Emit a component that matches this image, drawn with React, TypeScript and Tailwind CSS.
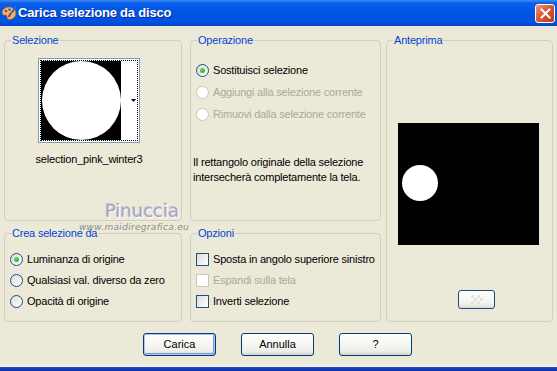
import React from "react";

const font = "font-['Liberation_Sans',Arial,sans-serif]";

const Radio = ({ checked, disabled }: { checked?: boolean; disabled?: boolean }) => (
  <span
    className={
      disabled
        ? "flex h-[13px] w-[13px] shrink-0 items-center justify-center rounded-full border border-[#cac8bb] bg-white"
        : "flex h-[13px] w-[13px] shrink-0 items-center justify-center rounded-full border border-[#1c5180] bg-[linear-gradient(135deg,#dcdcd7,#ffffff)]"
    }
  >
    {checked && <span className="h-[5px] w-[5px] rounded-full bg-[radial-gradient(circle_at_35%_35%,#5fdc5a,#21a121)]" />}
  </span>
);

const Check = ({ disabled }: { disabled?: boolean }) => (
  <span
    className={
      disabled
        ? "h-[13px] w-[13px] shrink-0 border border-[#cac8bb] bg-white"
        : "h-[13px] w-[13px] shrink-0 border border-[#1c5180] bg-[linear-gradient(135deg,#dcdcd7,#ffffff)]"
    }
  />
);

const Legend = ({ children }: { children: React.ReactNode }) => (
  <legend className="ml-[6px] px-[1px] text-[11px] leading-[13px] text-[#0046d5]">{children}</legend>
);

const Group = ({ title, className, children }: { title: string; className: string; children: React.ReactNode }) => (
  <fieldset className={`m-0 min-w-0 rounded-[4px] border border-[#d0d0bf] p-0 ${className}`}>
    <Legend>{title}</Legend>
    {children}
  </fieldset>
);

const XpButton = ({ label, primary }: { label: string; primary?: boolean }) => (
  <button
    className={
      primary
        ? "flex h-[23px] w-[73px] items-center justify-center rounded-[3px] border border-[#003c74] bg-[linear-gradient(#ffffff,#f0f0ea_80%,#d8d4c6)] text-[11px] text-black shadow-[inset_0_0_0_1px_#a9c4f0,inset_-1px_-1px_0_1px_#7a97e8]"
        : "flex h-[23px] w-[73px] items-center justify-center rounded-[3px] border border-[#003c74] bg-[linear-gradient(#ffffff,#f0f0ea_80%,#d8d4c6)] text-[11px] text-black"
    }
  >
    {label}
  </button>
);

const AppIcon = () => (
  <svg width="16" height="16" viewBox="0 0 16 16">
    <path d="M8 2C4 2 1 4.5 1 7.5c0 2.5 2 3 3.5 2.8 1.3-.2 1.8.6 1.5 1.8-.3 1.4.6 2.4 2.4 2.4C12.2 14.5 15 11.8 15 8.2 15 4.6 12 2 8 2z" fill="#e9b77a" stroke="#8b5a22" strokeWidth="0.8" />
    <circle cx="5" cy="6" r="1.3" fill="#d8261c" />
    <circle cx="8.5" cy="4.6" r="1.2" fill="#2255d6" />
    <circle cx="11.8" cy="6.2" r="1.2" fill="#2f9d2f" />
    <path d="M15 1.5 9 9.5" stroke="#3a5fd0" strokeWidth="1.6" strokeLinecap="round" />
    <path d="M9.2 9.2 8 11.2" stroke="#c0301c" strokeWidth="2" strokeLinecap="round" />
  </svg>
);

export default function App() {
  return (
    <div className={`relative flex h-[371px] w-[557px] flex-col overflow-hidden bg-[#ece9d8] ${font}`}>
      {/* Title bar */}
      <div className="flex h-[26px] shrink-0 items-center bg-[linear-gradient(#3d8cf5,#0a5fea_12%,#0055e5_45%,#0053e0_80%,#0046c9)] pl-[1px] pr-[2px]">
        <AppIcon />
        <span className="ml-[1px] text-[13px] font-bold tracking-[-0.2px] text-white [text-shadow:1px_1px_#0b2a8f]">
          Carica selezione da disco
        </span>
        <span className="ml-auto flex h-[19px] w-[20px] items-center justify-center rounded-[3px] border border-white bg-[linear-gradient(135deg,#f0957a,#d9532f_50%,#c13a1a)]">
          <svg width="11" height="11" viewBox="0 0 11 11">
            <path d="M1.5 1.5l8 8M9.5 1.5l-8 8" stroke="white" strokeWidth="2" strokeLinecap="square" />
          </svg>
        </span>
      </div>

      {/* Body */}
      <div className="flex flex-1 flex-col whitespace-nowrap pl-[4px] pt-[8px] tracking-[-0.2px]">
        <div className="grid grid-cols-[178px_8px_191px_5px_167px] grid-rows-[187px_95px] gap-y-[6px]">
          <Group title="Selezione" className="col-start-1 row-start-1">
            <div className="ml-[24px] mt-[11px] flex w-[120px] flex-col items-center">
              <div className="h-[85px] w-[102px] border border-[#7f9db9] bg-white p-[1px]">
                <div className="flex h-full w-full border border-dotted border-black">
                  <div className="flex h-[79px] w-[80px] items-center justify-center bg-black">
                    <div className="h-[79px] w-[79px] rounded-full bg-white" />
                  </div>
                  <div className="flex flex-1 items-center justify-end pr-[1px]">
                    <svg width="5" height="3" viewBox="0 0 5 3">
                      <path d="M0 0h5L2.5 3z" fill="black" />
                    </svg>
                  </div>
                </div>
              </div>
              <span className="mt-[10px] text-[11px] leading-[13px] text-black">selection_pink_winter3</span>
            </div>
          </Group>

          <Group title="Operazione" className="col-start-3 row-start-1">
            <div className="ml-[5px] mt-[12px] flex flex-col text-[11px]">
              <div className="flex h-[22px] items-center gap-[4px] text-black">
                <Radio checked />
                <span>Sostituisci selezione</span>
              </div>
              <div className="flex h-[22px] items-center gap-[4px] text-[#aca899]">
                <Radio disabled />
                <span>Aggiungi alla selezione corrente</span>
              </div>
              <div className="flex h-[22px] items-center gap-[4px] text-[#aca899]">
                <Radio disabled />
                <span>Rimuovi dalla selezione corrente</span>
              </div>
            </div>
            <p className="ml-[2px] mt-[30px] text-[11px] leading-[15px] text-black">
              Il rettangolo originale della selezione
              <br />
              intersecherà completamente la tela.
            </p>
          </Group>

          <Group title="Anteprima" className="col-start-5 row-span-2 row-start-1">
            <div className="ml-[11px] mt-[76px] h-[122px] w-[141px] bg-black pl-[4px] pt-[42px]">
              <div className="h-[36px] w-[36px] rounded-full bg-white" />
            </div>
            <button className="ml-[71px] mt-[45px] flex h-[19px] w-[37px] items-center justify-center rounded-[3px] border border-[#1c4a80] bg-[linear-gradient(#ffffff,#f4f4f0_70%,#dedbd0)]">
              <svg width="16" height="10" viewBox="0 0 16 10">
                <g fill="#e4e4e4">
                  <rect x="2" y="0" width="3" height="3" />
                  <rect x="8" y="0" width="3" height="3" />
                  <rect x="5" y="3" width="3" height="3" />
                  <rect x="11" y="3" width="3" height="3" />
                  <rect x="2" y="6" width="3" height="3" />
                  <rect x="8" y="6" width="3" height="3" />
                </g>
              </svg>
            </button>
          </Group>

          <Group title="Crea selezione da" className="col-start-1 row-start-2">
            <div className="ml-[5px] mt-[9px] flex flex-col text-[11px] text-black">
              <div className="flex h-[21px] items-center gap-[4px]">
                <Radio checked />
                <span>Luminanza di origine</span>
              </div>
              <div className="flex h-[21px] items-center gap-[4px]">
                <Radio />
                <span>Qualsiasi val. diverso da zero</span>
              </div>
              <div className="flex h-[21px] items-center gap-[4px]">
                <Radio />
                <span>Opacità di origine</span>
              </div>
            </div>
          </Group>

          <Group title="Opzioni" className="col-start-3 row-start-2">
            <div className="ml-[5px] mt-[9px] flex flex-col text-[11px]">
              <div className="flex h-[21px] items-center gap-[4px] text-black">
                <Check />
                <span>Sposta in angolo superiore sinistro</span>
              </div>
              <div className="flex h-[21px] items-center gap-[4px] text-[#aca899]">
                <Check disabled />
                <span>Espandi sulla tela</span>
              </div>
              <div className="flex h-[21px] items-center gap-[4px] text-black">
                <Check />
                <span>Inverti selezione</span>
              </div>
            </div>
          </Group>
        </div>

        {/* Buttons */}
        <div className="ml-[139px] mt-[11px] flex gap-[25px] tracking-normal">
          <XpButton label="Carica" primary />
          <XpButton label="Annulla" />
          <XpButton label="?" />
        </div>
      </div>

      {/* Bottom frame */}
      <div className="h-[2px] shrink-0 bg-[#f4f2e8]" />
      <div className="h-[4px] shrink-0 bg-[linear-gradient(#1c4bd0,#0a2fa8)]" />

      {/* Watermark */}
      <div className="pointer-events-none absolute left-[74px] top-[199px] flex w-[115px] flex-col items-end">
        <span className="mr-[10px] font-['DejaVu_Sans',sans-serif] text-[18px] leading-[24px] text-[#a4a4c0] [text-shadow:1px_1px_0_#ffffff,-1px_-1px_0_#c8c8d8]">
          Pinuccia
        </span>
        <span className="-mt-[1px] font-['DejaVu_Sans',sans-serif] text-[9px] italic leading-[10px] tracking-[0.3px] text-[#8c8c8c]">
          www.maidiregrafica.eu
        </span>
      </div>
    </div>
  );
}
